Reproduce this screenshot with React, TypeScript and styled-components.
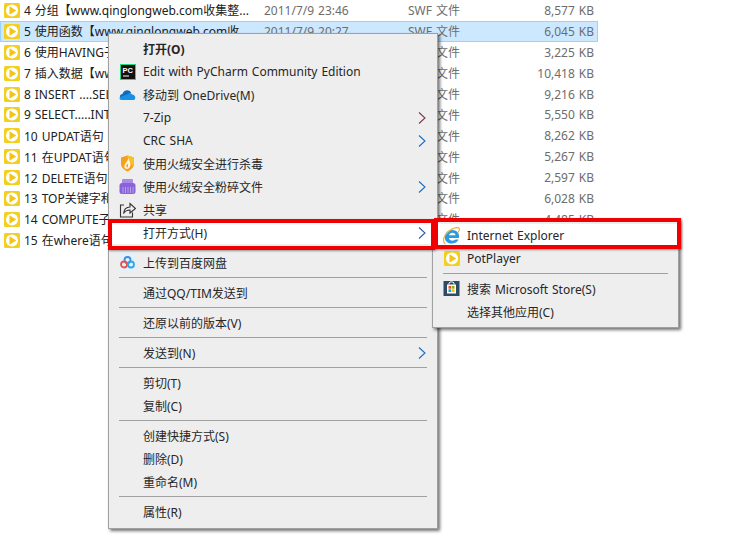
import type { ReactNode } from "react"
import styled, { createGlobalStyle } from "styled-components"

interface FileItem {
  name: string
  date?: string
  type?: string
  size?: string
  selected?: boolean
}

// names and dates that sit behind the menu are cut down to what shows
const FILES: FileItem[] = [
  { name: "4 分组【www.qinglongweb.com收集整...", date: "2011/7/9 23:46", type: "SWF 文件", size: "8,577 KB" },
  { name: "5 使用函数【www.qinglongweb.com收", date: "2011/7/9 20:27", type: "SWF 文件", size: "6,045 KB", selected: true },
  { name: "6 使用HAVING子句", type: "SWF 文件", size: "3,225 KB" },
  { name: "7 插入数据【www", type: "SWF 文件", size: "10,418 KB" },
  { name: "8 INSERT ....SELECT", type: "SWF 文件", size: "9,216 KB" },
  { name: "9 SELECT.....INTO", type: "SWF 文件", size: "5,550 KB" },
  { name: "10 UPDAT语句", type: "SWF 文件", size: "8,262 KB" },
  { name: "11 在UPDAT语句中", type: "SWF 文件", size: "5,267 KB" },
  { name: "12 DELETE语句", type: "SWF 文件", size: "2,597 KB" },
  { name: "13 TOP关键字和", type: "SWF 文件", size: "6,028 KB" },
  { name: "14 COMPUTE子句", type: "SWF 文件", size: "4,485 KB" },
  { name: "15 在where语句中" },
]

const GlobalStyle = createGlobalStyle`
  html, body {
    margin: 0;
    padding: 0;
    height: 100%;
    overflow: hidden;
    background: #fff;
    font-family: "Noto Sans", "Noto Sans CJK SC", sans-serif;
    font-size: 12px;
    word-spacing: 0.8px;
  }
`

const Page = styled.div`
  position: relative;
  width: 756px;
  height: 544px;
  overflow: hidden;
`

const FileList = styled.div`
  width: 598px;
`

const Row = styled.div<{ $selected?: boolean }>`
  box-sizing: border-box;
  height: 20.9px;
  display: grid;
  grid-template-columns: 20px 240px 144px 1fr auto;
  align-items: center;
  padding: 0 4px;
  background: ${(p) => (p.$selected ? "#cce8ff" : "transparent")};
  box-shadow: ${(p) => (p.$selected ? "inset 0 0 0 1px #99d1ff" : "none")};
`

const FileName = styled.span`
  color: #202020;
  white-space: nowrap;
  overflow: hidden;
`

const Meta = styled.span`
  color: #6d6d6d;
  white-space: nowrap;
`

const Menu = styled.div`
  position: absolute;
  box-sizing: border-box;
  background: #eeeeee;
  border: 1px solid #a0a0a0;
  box-shadow: 2px 2px 3px rgba(0, 0, 0, 0.55);
  padding: 3px 0;
`

const MainMenu = styled(Menu)`
  left: 108px;
  top: 33px;
  width: 330px;
  height: 496px;
`

const SubMenu = styled(Menu)`
  left: 432px;
  top: 220px;
  width: 247px;
  height: 108px;
`

const ItemRow = styled.div<{ $bold?: boolean; $active?: boolean }>`
  height: 23px;
  display: flex;
  align-items: center;
  padding: 0 11px 0 10px;
  color: #262626;
  font-weight: ${(p) => (p.$bold ? 700 : 400)};
  background: ${(p) => (p.$active ? "#fff" : "transparent")};
  white-space: nowrap;
`

const IconSlot = styled.span`
  flex: none;
  width: 17px;
  height: 17px;
  margin-right: 7px;
  display: flex;
  align-items: center;
  justify-content: center;
`

const Arrow = styled.svg`
  flex: none;
  margin-left: auto;
  width: 8px;
  height: 12px;
`

const Separator = styled.div`
  height: 1px;
  margin: 3px 10px;
  background: #a0a0a0;
`

const Highlight = styled.div`
  position: absolute;
  box-sizing: border-box;
  border: 4px solid #f00000;
  box-shadow: 1px 1px 2px rgba(0, 0, 0, 0.4);
  pointer-events: none;
`

const MainHighlight = styled(Highlight)`
  left: 108px;
  top: 219px;
  width: 327px;
  height: 31px;
`

const SubHighlight = styled(Highlight)`
  left: 434px;
  top: 218px;
  width: 247px;
  height: 31px;
`

function PlayIcon() {
  return (
    <svg width="16" height="15" viewBox="0 0 16 15">
      <rect width="16" height="15" rx="1.5" fill="#f3cf1f" />
      <circle cx="8" cy="7.5" r="6" fill="#fff" />
      <path d="M5.8 3.8 L11.8 7.5 L5.8 11.2 Z" fill="#f0c419" stroke="#f0c419" strokeLinejoin="round" strokeWidth="0.6" />
    </svg>
  )
}

function PyCharmIcon() {
  return (
    <svg width="16" height="16" viewBox="0 0 16 16">
      <rect width="16" height="16" fill="#21d789" />
      <rect x="1" y="1" width="14" height="14" fill="#111" />
      <text x="2.5" y="8.5" fontSize="7.5" fontWeight="700" fill="#fff" fontFamily="Liberation Sans, sans-serif">
        PC
      </text>
      <rect x="3" y="11.5" width="6" height="1" fill="#fff" />
    </svg>
  )
}

function OneDriveIcon() {
  return (
    <svg width="17" height="17" viewBox="0 0 17 17">
      <path d="M3.5 8 C4.5 4 10 3 12 6.5 L8 12 L2 12 C0 11 1 8 3.5 8 Z" fill="#0f6cbd" />
      <path d="M3 14 C0.5 14 0 12.5 1 11 L8 8.5 C9.5 7 12 6.5 13 8.5 C15.5 8.5 17 11 16 13 C15.5 14 15 14 14 14 Z" fill="#1a8fe3" />
    </svg>
  )
}

function ShieldIcon() {
  return (
    <svg width="17" height="17" viewBox="0 0 17 17">
      <path d="M8.5 0.5 L15 2.5 L15 9 C15 12.5 11.5 15 8.5 16.5 C5.5 15 2 12.5 2 9 L2 2.5 Z" fill="#f59f1c" />
      <path d="M8.5 0.5 L15 2.5 L15 9 C15 10 14.5 11 14 11.5 L8.5 3 Z" fill="#fbc21f" />
      <path d="M9.5 3 C10 6 12 7.5 11.5 10.5 C11 13 9 14 8 14 C6 14 4.8 12 5.5 10 C6 8.5 8.5 6.5 9.5 3 Z" fill="#fff4dc" />
      <path d="M8.5 8.5 C9.2 10 9.5 11.5 8.2 12.5 C7 12 7 10 8.5 8.5 Z" fill="#f59f1c" />
    </svg>
  )
}

function ShredderIcon() {
  return (
    <svg width="17" height="17" viewBox="0 0 17 17">
      <rect x="3" y="1" width="11" height="5" rx="1" fill="#a98ce6" />
      <rect x="0.5" y="5" width="16" height="11" rx="2.5" fill="#8a63d8" />
      <path d="M4 9 V15 M6.5 9 V15 M9 9 V15 M11.5 9 V15 M14 9 V15" stroke="#b7a0ea" strokeWidth="1" />
    </svg>
  )
}

function ShareIcon() {
  return (
    <svg width="17" height="17" viewBox="0 0 17 17" fill="none" stroke="#333" strokeWidth="1.1">
      <path d="M5 4 H1.5 V16 H13.5 V11.5" />
      <path d="M4.5 12.5 C5 8 8 6 11 6 V2.5 L16.5 7.5 L11 12 V9 C8.5 9 6 10 4.5 12.5 Z" />
    </svg>
  )
}

function BaiduIcon() {
  return (
    <svg width="17" height="17" viewBox="0 0 17 17">
      <rect width="17" height="17" rx="3" fill="#e4f1fb" />
      <circle cx="8.5" cy="6" r="3" fill="none" stroke="#3a8ee6" strokeWidth="1.8" />
      <circle cx="5" cy="10.5" r="3" fill="none" stroke="#e8524a" strokeWidth="1.8" />
      <circle cx="12" cy="10.5" r="3" fill="none" stroke="#2fa7e8" strokeWidth="1.8" />
    </svg>
  )
}

function IeIcon() {
  return (
    <svg width="17" height="18" viewBox="0 0 17 18">
      <path
        d="M16 11 H6 C6.3 14 10.5 14.5 12.6 12.6 H15.6 C13.6 17.6 5 18 2.4 13.2 C0.6 8.8 3.2 3 9 3 C13.8 3 16.8 6.4 16 11 Z M6 8.2 H12.6 C12.3 4.8 6.5 4.8 6 8.2 Z"
        fill="#2b9ae0"
        fillRule="evenodd"
      />
      <path d="M2.5 17 C-1.5 14 1 8 6 4 C10 1 15 -0.5 16.3 1.5 C16.8 2.5 16 4 15 5.5" fill="none" stroke="#e8b53a" strokeWidth="1.2" />
    </svg>
  )
}

function StoreIcon() {
  return (
    <svg width="17" height="17" viewBox="0 0 17 17">
      <rect x="0.5" y="1" width="16" height="15" fill="#2f4a63" />
      <path d="M6 4.5 V3 C6 1.5 11 1.5 11 3 V4.5" fill="none" stroke="#fff" strokeWidth="1" />
      <rect x="4" y="4.5" width="9" height="9" fill="#fff" />
      <rect x="5.5" y="6" width="2.7" height="2.7" fill="#f25022" />
      <rect x="8.8" y="6" width="2.7" height="2.7" fill="#7fba00" />
      <rect x="5.5" y="9.3" width="2.7" height="2.7" fill="#00a4ef" />
      <rect x="8.8" y="9.3" width="2.7" height="2.7" fill="#ffb900" />
    </svg>
  )
}

function Chevron({ color = "#1a6fc0" }: { color?: string }) {
  return (
    <Arrow viewBox="0 0 8 12">
      <path d="M1 0.5 L7 6 L1 11.5" fill="none" stroke={color} strokeWidth="1.1" />
    </Arrow>
  )
}

interface ItemProps {
  icon?: ReactNode
  arrow?: string
  bold?: boolean
  active?: boolean
  children: ReactNode
}

function Item({ icon, arrow, bold, active, children }: ItemProps) {
  return (
    <ItemRow $bold={bold} $active={active}>
      <IconSlot>{icon}</IconSlot>
      {children}
      {arrow && <Chevron color={arrow} />}
    </ItemRow>
  )
}

export default function App() {
  return (
    <Page>
      <GlobalStyle />
      <FileList>
        {FILES.map((file) => (
          <Row key={file.name} $selected={file.selected}>
            <PlayIcon />
            <FileName>{file.name}</FileName>
            <Meta>{file.date}</Meta>
            <Meta>{file.type}</Meta>
            <Meta>{file.size}</Meta>
          </Row>
        ))}
      </FileList>

      <MainMenu>
        <Item bold>打开(O)</Item>
        <Item icon={<PyCharmIcon />}>Edit with PyCharm Community Edition</Item>
        <Item icon={<OneDriveIcon />}>移动到 OneDrive(M)</Item>
        <Item arrow="#7a3a55">7-Zip</Item>
        <Item arrow="#1a6fc0">CRC SHA</Item>
        <Item icon={<ShieldIcon />}>使用火绒安全进行杀毒</Item>
        <Item icon={<ShredderIcon />} arrow="#1a6fc0">使用火绒安全粉碎文件</Item>
        <Item icon={<ShareIcon />}>共享</Item>
        <Item active arrow="#2a5fa8">打开方式(H)</Item>
        <Separator />
        <Item icon={<BaiduIcon />}>上传到百度网盘</Item>
        <Separator />
        <Item>通过QQ/TIM发送到</Item>
        <Separator />
        <Item>还原以前的版本(V)</Item>
        <Separator />
        <Item arrow="#1a6fc0">发送到(N)</Item>
        <Separator />
        <Item>剪切(T)</Item>
        <Item>复制(C)</Item>
        <Separator />
        <Item>创建快捷方式(S)</Item>
        <Item>删除(D)</Item>
        <Item>重命名(M)</Item>
        <Separator />
        <Item>属性(R)</Item>
      </MainMenu>

      <SubMenu>
        <Item active icon={<IeIcon />}>Internet Explorer</Item>
        <Item icon={<PlayIcon />}>PotPlayer</Item>
        <Separator />
        <Item icon={<StoreIcon />}>搜索 Microsoft Store(S)</Item>
        <Item>选择其他应用(C)</Item>
      </SubMenu>

      <MainHighlight />
      <SubHighlight />
    </Page>
  )
}
